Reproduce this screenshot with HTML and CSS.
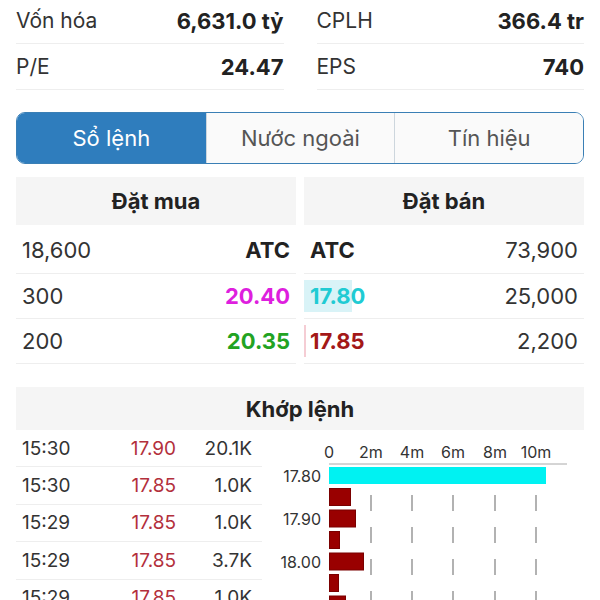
FILE: index.html
```html
<!DOCTYPE html>
<html lang="vi">
<head>
  <meta charset="UTF-8">
  <title>Sổ lệnh</title>
  <link rel="stylesheet" href="styles.css">
</head>
<body>
  <div class="page">
    <div class="stats">
      <div class="stat"><span>Vốn hóa</span><b>6,631.0 tỷ</b></div>
      <div class="stat"><span>CPLH</span><b>366.4 tr</b></div>
      <div class="stat"><span>P/E</span><b>24.47</b></div>
      <div class="stat"><span>EPS</span><b>740</b></div>
    </div>

    <div class="tabs">
      <div class="tab active">Sổ lệnh</div>
      <div class="tab">Nước ngoài</div>
      <div class="tab">Tín hiệu</div>
    </div>

    <div class="book">
      <div class="side">
        <div class="head">Đặt mua</div>
        <div class="row"><span>18,600</span><b>ATC</b></div>
        <div class="row"><span>300</span><b class="ceil">20.40</b></div>
        <div class="row"><span>200</span><b class="up">20.35</b></div>
      </div>
      <div class="side">
        <div class="head">Đặt bán</div>
        <div class="row"><b>ATC</b><span>73,900</span></div>
        <div class="row"><b class="floor depth cyan" style="width: 48px">17.80</b><span>25,000</span></div>
        <div class="row"><b class="down depth pink">17.85</b><span>2,200</span></div>
      </div>
    </div>

    <div class="match">
      <div class="head">Khớp lệnh</div>
      <div class="match-body">
        <div class="trades">
          <div class="trade"><span>15:30</span><span class="red">17.90</span><span>20.1K</span></div>
          <div class="trade"><span>15:30</span><span class="red">17.85</span><span>1.0K</span></div>
          <div class="trade"><span>15:29</span><span class="red">17.85</span><span>1.0K</span></div>
          <div class="trade"><span>15:29</span><span class="red">17.85</span><span>3.7K</span></div>
          <div class="trade"><span>15:29</span><span class="red">17.85</span><span>1.0K</span></div>
        </div>
        <svg class="chart" width="322" height="170" viewBox="0 0 322 170">
          <g class="axis-text" text-anchor="middle">
            <text x="67" y="28">0</text>
            <text x="109" y="28">2m</text>
            <text x="150" y="28">4m</text>
            <text x="191" y="28">6m</text>
            <text x="233" y="28">8m</text>
            <text x="274" y="28">10m</text>
          </g>
          <line x1="67" y1="34" x2="305" y2="34" stroke="#aaa" stroke-width="1"/>
          <g stroke="#999" stroke-width="1.5" stroke-dasharray="16 16">
            <line x1="109" y1="65" x2="109" y2="200"/>
            <line x1="150" y1="65" x2="150" y2="200"/>
            <line x1="191" y1="65" x2="191" y2="200"/>
            <line x1="233" y1="65" x2="233" y2="200"/>
            <line x1="274" y1="65" x2="274" y2="200"/>
          </g>
          <rect x="67" y="37" width="217" height="17" fill="#00f2f2"/>
          <g fill="#990000" stroke="#7a0000" stroke-width="1">
            <rect x="67.5" y="58.5" width="21" height="17"/>
            <rect x="67.5" y="80" width="26" height="17"/>
            <rect x="67.5" y="101.5" width="10" height="17"/>
            <rect x="67.5" y="123" width="34" height="17"/>
            <rect x="67.5" y="144.5" width="9" height="17"/>
            <rect x="67.5" y="166" width="16" height="17"/>
          </g>
          <g class="axis-text" text-anchor="end">
            <text x="59" y="52">17.80</text>
            <text x="59" y="95">17.90</text>
            <text x="59" y="138">18.00</text>
          </g>
        </svg>
      </div>
    </div>
  </div>
</body>
</html>
```

FILE: styles.css
```css
body {
  margin: 0;
  background-color: #fff;
  font-family: Inter, "Noto Sans", sans-serif;
  color: #222;
  overflow: hidden;
}
.page {
  padding: 0 16px;
}
.stats {
  display: grid;
  grid-template-columns: 1fr 1fr;
  column-gap: 33px;
  margin-top: -2px;
}
.stat {
  display: flex;
  justify-content: space-between;
  align-items: center;
  height: 45px;
  border-bottom: 1px solid #eee;
  font-size: 21px;
}
.stat span {
  color: #333;
}
.stat b {
  font-weight: 700;
  font-size: 22px;
}
.tabs {
  display: grid;
  grid-template-columns: 1fr 1fr 1fr;
  margin-top: 22px;
  border: 1.5px solid #3a7fb5;
  border-radius: 9px;
  overflow: hidden;
  height: 50px;
}
.tab {
  display: flex;
  justify-content: center;
  align-items: center;
  background-color: #fafafa;
  color: #555;
  font-size: 22px;
  border-left: 1.5px solid #cdd6dd;
}
.tab:first-child {
  border-left: none;
}
.tab.active {
  background-color: #2f7dbd;
  color: #fff;
}
.book {
  display: grid;
  grid-template-columns: 1fr 1fr;
  column-gap: 8px;
  margin-top: 13px;
}
.head {
  background-color: #f5f5f5;
  height: 48px;
  display: flex;
  justify-content: center;
  align-items: center;
  font-size: 22px;
  font-weight: 700;
}
.row {
  display: flex;
  justify-content: space-between;
  align-items: center;
  height: 44px;
  padding: 0 6px;
  border-bottom: 1px solid #eee;
  font-size: 22px;
}
.row:nth-child(2) {
  margin-top: 2px;
  height: 46px;
}
.row span {
  color: #333;
}
.row b {
  font-weight: 700;
}
.depth {
  box-sizing: border-box;
  height: 32px;
  display: flex;
  align-items: center;
  margin-left: -6px;
  padding-left: 6px;
  white-space: nowrap;
}
.depth.cyan {
  background-color: #d9f3f7;
}
.depth.pink {
  background: linear-gradient(to right, #f5cdd4 2px, transparent 2px);
}
.ceil {
  color: #de1fde;
}
.up {
  color: #22a322;
}
.floor {
  color: #20cbd3;
}
.down {
  color: #a31818;
}
.match {
  margin-top: 23px;
}
.match .head {
  height: 43px;
}
.match-body {
  display: flex;
}
.trades {
  width: 246px;
}
.trade {
  display: grid;
  grid-template-columns: 60px 94px 76px;
  align-items: center;
  height: 36.5px;
  padding-left: 6px;
  border-bottom: 1px solid #eee;
  font-size: 19px;
  color: #333;
}
.trade:first-child {
  height: 36px;
}
.trade span:nth-child(2),
.trade span:nth-child(3) {
  text-align: right;
}
.trade .red {
  color: #b3303c;
}
.chart {
  display: block;
  flex-shrink: 0;
}
.axis-text {
  font-family: Inter, "Noto Sans", sans-serif;
  font-size: 16px;
  fill: #333;
}
```
